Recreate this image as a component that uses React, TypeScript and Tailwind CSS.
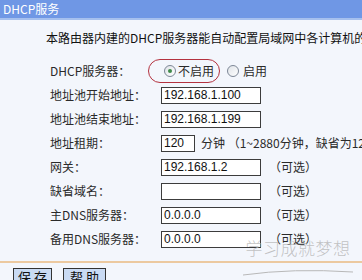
const CJK = "font-['Noto_Sans_CJK_SC','Noto_Sans',sans-serif]"

function Radio({ checked }: { checked?: boolean }) {
  return (
    <span className="flex h-[12px] w-[12px] shrink-0 items-center justify-center rounded-full border border-[#7d8796] bg-gradient-to-br from-[#dfe3e8] to-white">
      {checked && <span className="h-[4px] w-[4px] rounded-full bg-[#3f8a4a]" />}
    </span>
  )
}

function Field({ value = '', width = 'w-[100px]' }: { value?: string; width?: string }) {
  return (
    <div
      className={`${width} flex h-[17px] shrink-0 items-center border border-[#3c3c3c] bg-white px-[2px] font-['Liberation_Sans',sans-serif] text-[12px] text-[#111]`}
    >
      {value}
    </div>
  )
}

function Row({ label, children }: { label: string; children: React.ReactNode }) {
  return (
    <div className="flex h-[24px] items-center">
      <span className="w-[111px] shrink-0 whitespace-nowrap">{label}</span>
      {children}
    </div>
  )
}

function Optional() {
  return <span className="ml-[8px] whitespace-nowrap">（可选）</span>
}

export default function App() {
  return (
    <div className={`relative h-[280px] w-[362px] overflow-hidden bg-[#f3f6fc] ${CJK} text-[12px] text-[#2a2a2a]`}>
      {/* title bar */}
      <div className="h-[20px] border-b-2 border-[#a6c0ee] bg-[#6f97e5] pl-[3px] text-[12px] leading-[18px] text-white">
        DHCP服务
      </div>

      <p className="mt-[11px] whitespace-nowrap pl-[46px] leading-[14px] text-[#111]">
        本路由器内建的DHCP服务器能自动配置局域网中各计算机的TCP/IP协议。
      </p>

      <div className="mt-[14px] pl-[50px]">
        <div className="flex h-[24px] items-center">
          <span className="w-[98px] shrink-0 whitespace-nowrap">DHCP服务器：</span>
          <div className="flex h-[24px] items-center rounded-[12px] border border-[#b4323f] pl-[15px] pr-[5px]">
            <Radio checked />
            <span className="ml-[2px]">不启用</span>
          </div>
          <span className="ml-[7px]">
            <Radio />
          </span>
          <span className="ml-[4px]">启用</span>
        </div>

        <Row label="地址池开始地址：">
          <Field value="192.168.1.100" />
        </Row>
        <Row label="地址池结束地址：">
          <Field value="192.168.1.199" />
        </Row>
        <Row label="地址租期：">
          <Field value="120" width="w-[34px]" />
          <span className="ml-[6px] whitespace-nowrap">分钟 （1~2880分钟，缺省为120分钟）</span>
        </Row>
        <Row label="网关：">
          <Field value="192.168.1.2" />
          <Optional />
        </Row>
        <Row label="缺省域名：">
          <Field />
          <Optional />
        </Row>
        <Row label="主DNS服务器：">
          <Field value="0.0.0.0" />
          <Optional />
        </Row>
        <Row label="备用DNS服务器：">
          <Field value="0.0.0.0" />
          <Optional />
        </Row>
      </div>

      <div className="mt-[10px] h-[2px] bg-[#ecc9a0]" />

      <div className="mt-[5px] flex gap-[11px] pl-[13px]">
        <button className="h-[18px] w-[39px] border border-[#333] bg-[#c9daf3] text-[13px] leading-[16px] text-[#111]">
          保 存
        </button>
        <button className="h-[18px] w-[43px] border border-[#333] bg-[#c9daf3] text-[13px] leading-[16px] text-[#111]">
          帮 助
        </button>
      </div>

      {/* watermark */}
      <div className="pointer-events-none absolute left-[243px] top-[238px] flex flex-col items-center">
        <span className="whitespace-nowrap font-['Noto_Sans_CJK_SC',serif] text-[17px] font-light leading-[20px] tracking-[0.5px] text-[#b4b4b4]/80">
          学习成就梦想
        </span>
        <svg width="110" height="8" viewBox="0 0 110 8" className="mt-[10px]">
          <path d="M 0 7 Q 50 0 110 4" fill="none" stroke="#b8b8b8" strokeWidth="1" />
        </svg>
      </div>
    </div>
  )
}
